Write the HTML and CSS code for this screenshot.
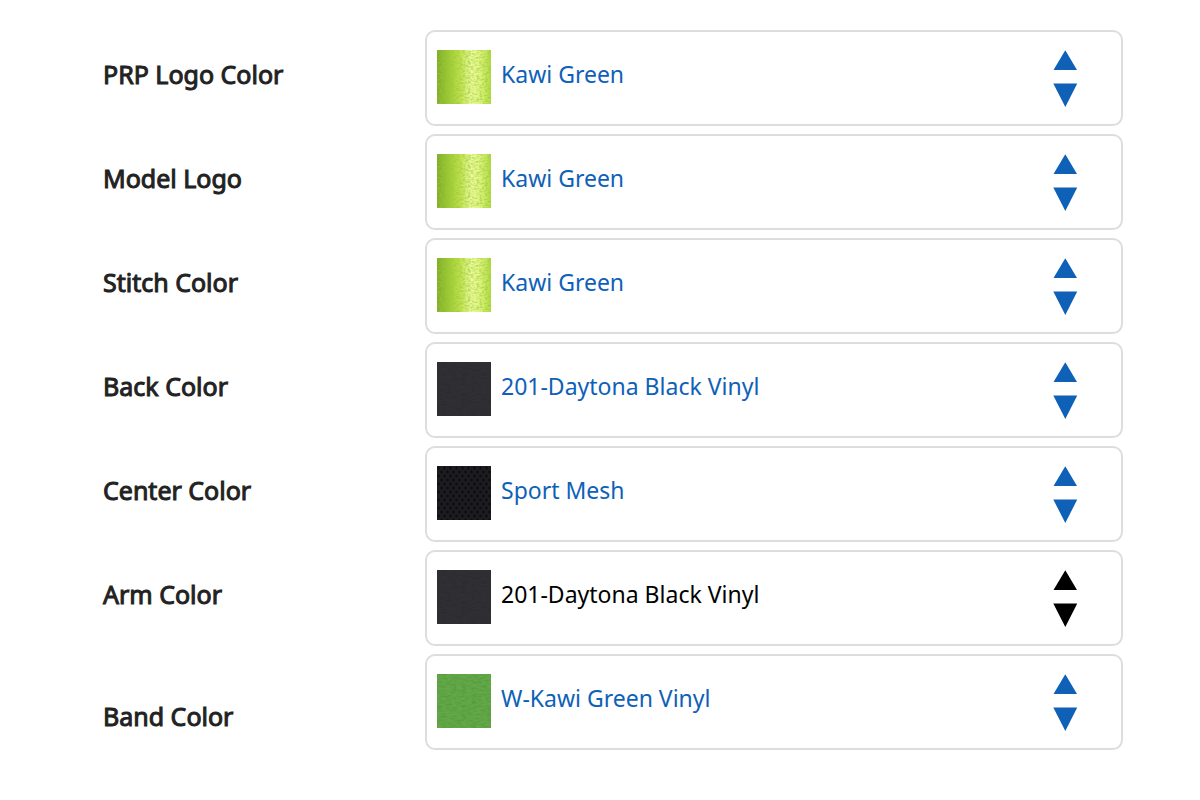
FILE: index.html
```html
<!DOCTYPE html>
<html lang="en">
<head>
  <meta charset="UTF-8">
  <meta name="viewport" content="width=device-width, initial-scale=1.0">
  <title>Seat Colors</title>
  <link rel="stylesheet" href="styles.css">
</head>
<body>
  <!-- shared swatches and arrows -->
  <svg class="defs" aria-hidden="true">
    <defs>
      <linearGradient id="thread-shade">
        <stop offset="0" stop-color="#7dac28"/>
        <stop offset="0.2" stop-color="#98c832"/>
        <stop offset="0.42" stop-color="#bbe24a"/>
        <stop offset="0.64" stop-color="#e8fb98"/>
        <stop offset="0.8" stop-color="#dcf67c"/>
        <stop offset="1" stop-color="#aedb40"/>
      </linearGradient>
      <filter id="thread-grain" x="0" y="0" width="1" height="1">
        <feTurbulence type="fractalNoise" baseFrequency="0.35 0.55" numOctaves="2" seed="4"/>
        <feColorMatrix values="0 0 0 0 0.36  0 0 0 0 0.54  0 0 0 0 0.05  1.8 0 0 0 -0.72"/>
      </filter>
      <filter id="vinyl-grain" x="0" y="0" width="1" height="1">
        <feTurbulence type="fractalNoise" baseFrequency="0.2 0.5" numOctaves="2" seed="8"/>
        <feColorMatrix values="0 0 0 0 0  0 0 0 0 0  0 0 0 0 0  0.2 0 0 0 -0.07"/>
      </filter>
      <pattern id="mesh-holes" width="6" height="8" patternUnits="userSpaceOnUse">
        <rect width="6" height="8" fill="#1c1b1f"/>
        <ellipse cx="1.5" cy="2" rx="1.2" ry="1.5" fill="#0b0b0e"/>
        <ellipse cx="4.5" cy="6" rx="1.2" ry="1.5" fill="#0b0b0e"/>
      </pattern>
      <symbol id="thread" viewBox="0 0 54 54">
        <rect width="54" height="54" fill="url(#thread-shade)"/>
        <rect width="54" height="54" filter="url(#thread-grain)"/>
      </symbol>
      <symbol id="black-vinyl" viewBox="0 0 54 54">
        <rect width="54" height="54" fill="#302f34"/>
        <rect width="54" height="54" filter="url(#vinyl-grain)"/>
      </symbol>
      <symbol id="mesh" viewBox="0 0 54 54">
        <rect width="54" height="54" fill="url(#mesh-holes)"/>
      </symbol>
      <symbol id="green-vinyl" viewBox="0 0 54 54">
        <rect width="54" height="54" fill="#62a947"/>
        <rect width="54" height="54" filter="url(#vinyl-grain)"/>
      </symbol>
      <symbol id="arrows" viewBox="0 0 24 58">
        <path d="M12.300 0.300L24 20H.5zM0.300 33.500h24L12.300 57z" fill="currentColor"/>
      </symbol>
    </defs>
  </svg>

  <form class="options">
    <div class="option">
      <label for="prp-logo">PRP Logo Color</label>
      <div class="picker">
        <svg class="swatch" aria-hidden="true"><use href="#thread"/></svg>
        <select id="prp-logo"><option>Kawi Green</option></select>
        <svg class="arrows" aria-hidden="true"><use href="#arrows"/></svg>
      </div>
    </div>
    <div class="option">
      <label for="model-logo">Model Logo</label>
      <div class="picker">
        <svg class="swatch" aria-hidden="true"><use href="#thread"/></svg>
        <select id="model-logo"><option>Kawi Green</option></select>
        <svg class="arrows" aria-hidden="true"><use href="#arrows"/></svg>
      </div>
    </div>
    <div class="option">
      <label for="stitch">Stitch Color</label>
      <div class="picker">
        <svg class="swatch" aria-hidden="true"><use href="#thread"/></svg>
        <select id="stitch"><option>Kawi Green</option></select>
        <svg class="arrows" aria-hidden="true"><use href="#arrows"/></svg>
      </div>
    </div>
    <div class="option">
      <label for="back">Back Color</label>
      <div class="picker">
        <svg class="swatch" aria-hidden="true"><use href="#black-vinyl"/></svg>
        <select id="back"><option>201-Daytona Black Vinyl</option></select>
        <svg class="arrows" aria-hidden="true"><use href="#arrows"/></svg>
      </div>
    </div>
    <div class="option">
      <label for="center">Center Color</label>
      <div class="picker">
        <svg class="swatch" aria-hidden="true"><use href="#mesh"/></svg>
        <select id="center"><option>Sport Mesh</option></select>
        <svg class="arrows" aria-hidden="true"><use href="#arrows"/></svg>
      </div>
    </div>
    <div class="option">
      <label for="arm">Arm Color</label>
      <div class="picker active">
        <svg class="swatch" aria-hidden="true"><use href="#black-vinyl"/></svg>
        <select id="arm"><option>201-Daytona Black Vinyl</option></select>
        <svg class="arrows" aria-hidden="true"><use href="#arrows"/></svg>
      </div>
    </div>
    <div class="option last">
      <label for="band">Band Color</label>
      <div class="picker">
        <svg class="swatch" aria-hidden="true"><use href="#green-vinyl"/></svg>
        <select id="band"><option>W-Kawi Green Vinyl</option></select>
        <svg class="arrows" aria-hidden="true"><use href="#arrows"/></svg>
      </div>
    </div>
  </form>
</body>
</html>
```
FILE: styles.css
```css
* {
  box-sizing: border-box;
}

body {
  margin: 0;
  background: #fff;
  font-family: "Noto Sans", "Open Sans", sans-serif;
}

.defs {
  position: absolute;
  width: 0;
  height: 0;
}

.options {
  display: flex;
  flex-direction: column;
  gap: 8px;
  padding: 30px 77px 30px 103px;
}

.option {
  display: grid;
  grid-template-columns: 322px 1fr;
  align-items: start;
}

.option label {
  padding-top: 27px;
  color: #222;
  font-size: 25px;
  line-height: 34px;
  -webkit-text-stroke: 1px #222;
}

.option.last label {
  padding-top: 45px;
}

.picker {
  display: flex;
  align-items: flex-start;
  height: 96px;
  padding: 18px 44px 18px 10px;
  border: 2px solid #ddd;
  border-radius: 10px;
  color: #0e61b7;
}

.picker.active {
  color: #000;
}

.picker select {
  flex: 1;
  min-width: 0;
  height: 48px;
  padding: 0 10px;
  border: 0;
  appearance: none;
  background: none;
  color: inherit;
  font-family: inherit;
  font-size: 23px;
  cursor: pointer;
}

.swatch {
  width: 54px;
  height: 54px;
}

.arrows {
  width: 24px;
  height: 58px;
  pointer-events: none;
}

@media (max-width: 768px) {
  .options {
    padding: 20px;
  }

  .option {
    grid-template-columns: 1fr;
  }

  .option label,
  .option.last label {
    padding-top: 8px;
  }
}
```
